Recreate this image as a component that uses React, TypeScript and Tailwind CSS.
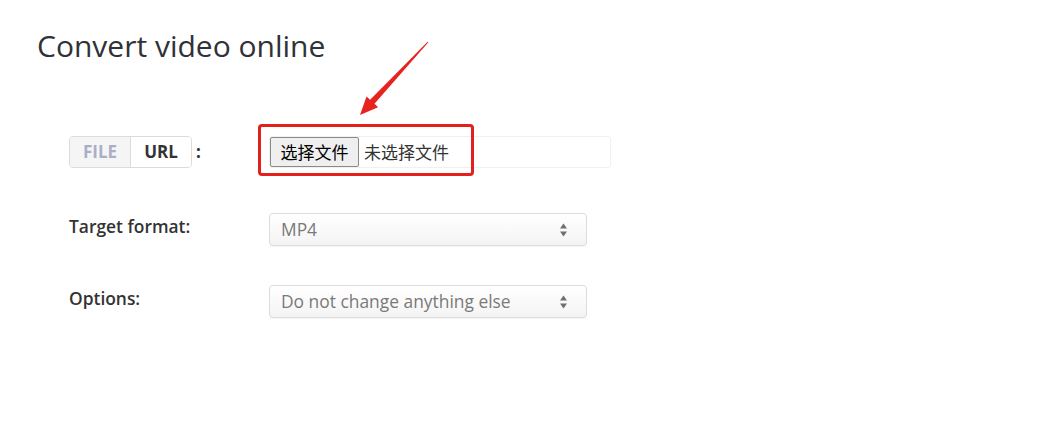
const SelectBox = ({ value }: { value: string }) => {
  return (
    <div className="flex h-[33px] w-[318px] items-center justify-between rounded-[4px] border border-[#dcdcdc] bg-gradient-to-b from-white to-[#f4f4f4] pl-[11px] pr-[18px] text-[17.4px] text-[#7a7a7a] shadow-[0_1px_1px_rgba(0,0,0,0.04)]">
      <span>{value}</span>
      <svg width="9" height="16" viewBox="0 0 9 16" className="text-[#707070]">
        <path d="M4.5 1.5 L8 6.5 H1 Z" fill="currentColor" />
        <path d="M4.5 14.5 L8 9.5 H1 Z" fill="currentColor" />
      </svg>
    </div>
  );
};

const App = () => {
  return (
    <div
      className="relative h-[446px] w-[1040px] bg-white text-[#333]"
      style={{ fontFamily: '"Open Sans", "Noto Sans CJK SC", sans-serif' }}
    >
      <div className="pl-[37px] pt-[25px]">
        <h1 className="text-[30px] leading-[42px] font-normal text-[#2f3236]">Convert video online</h1>
      </div>

      <div className="mt-[69px] pl-[69px]">
        {/* file / url row */}
        <div className="flex h-[32px] items-center">
          <div className="flex w-[200px] items-center">
            <div className="flex h-[32px] overflow-hidden rounded-[4px] border border-[#dcdcdc] text-[17px] font-bold">
              <span className="flex w-[61px] items-center justify-center bg-[#f5f5f5] text-[#a9b0c6] border-r border-[#dcdcdc]">FILE</span>
              <span className="flex w-[60px] items-center justify-center bg-white text-[#333]">URL</span>
            </div>
            <span className="ml-[4px] text-[17px] font-bold">:</span>
          </div>
          <div className="flex h-[32px] w-[342px] items-center rounded-[3px] border border-[#f0f0f0]">
            <span
              className="flex h-[30px] w-[89px] items-center justify-center rounded-[2px] border border-[#8a8a8a] bg-[#efefef] text-[17px] text-black"
              style={{ fontFamily: '"Noto Sans CJK SC", sans-serif' }}
            >
              选择文件
            </span>
            <span
              className="ml-[5px] text-[17px] text-[#333]"
              style={{ fontFamily: '"Noto Sans CJK SC", sans-serif' }}
            >
              未选择文件
            </span>
          </div>
        </div>

        {/* target format */}
        <div className="mt-[45px] flex items-start">
          <div className="w-[200px] text-[17.4px] font-semibold text-[#333]">Target format:</div>
          <SelectBox value="MP4" />
        </div>

        {/* options */}
        <div className="mt-[39px] flex items-start">
          <div className="w-[200px] text-[17.4px] font-semibold text-[#333]">Options:</div>
          <SelectBox value="Do not change anything else" />
        </div>
      </div>

      {/* annotation: red highlight box */}
      <div className="absolute left-[258px] top-[124px] h-[52px] w-[216px] rounded-[4px] border-[3px] border-[#e3211c]" />

      {/* annotation: arrow */}
      <svg className="absolute left-[355px] top-[38px]" width="80" height="82" viewBox="0 0 80 82">
        <polygon
          points="72.6,3.7 15.1,61.8 11.5,58.4 5,77 23.1,69.2 19.5,65.8 73.4,4.3"
          fill="#e8231f"
        />
      </svg>
    </div>
  );
};

export default App;
